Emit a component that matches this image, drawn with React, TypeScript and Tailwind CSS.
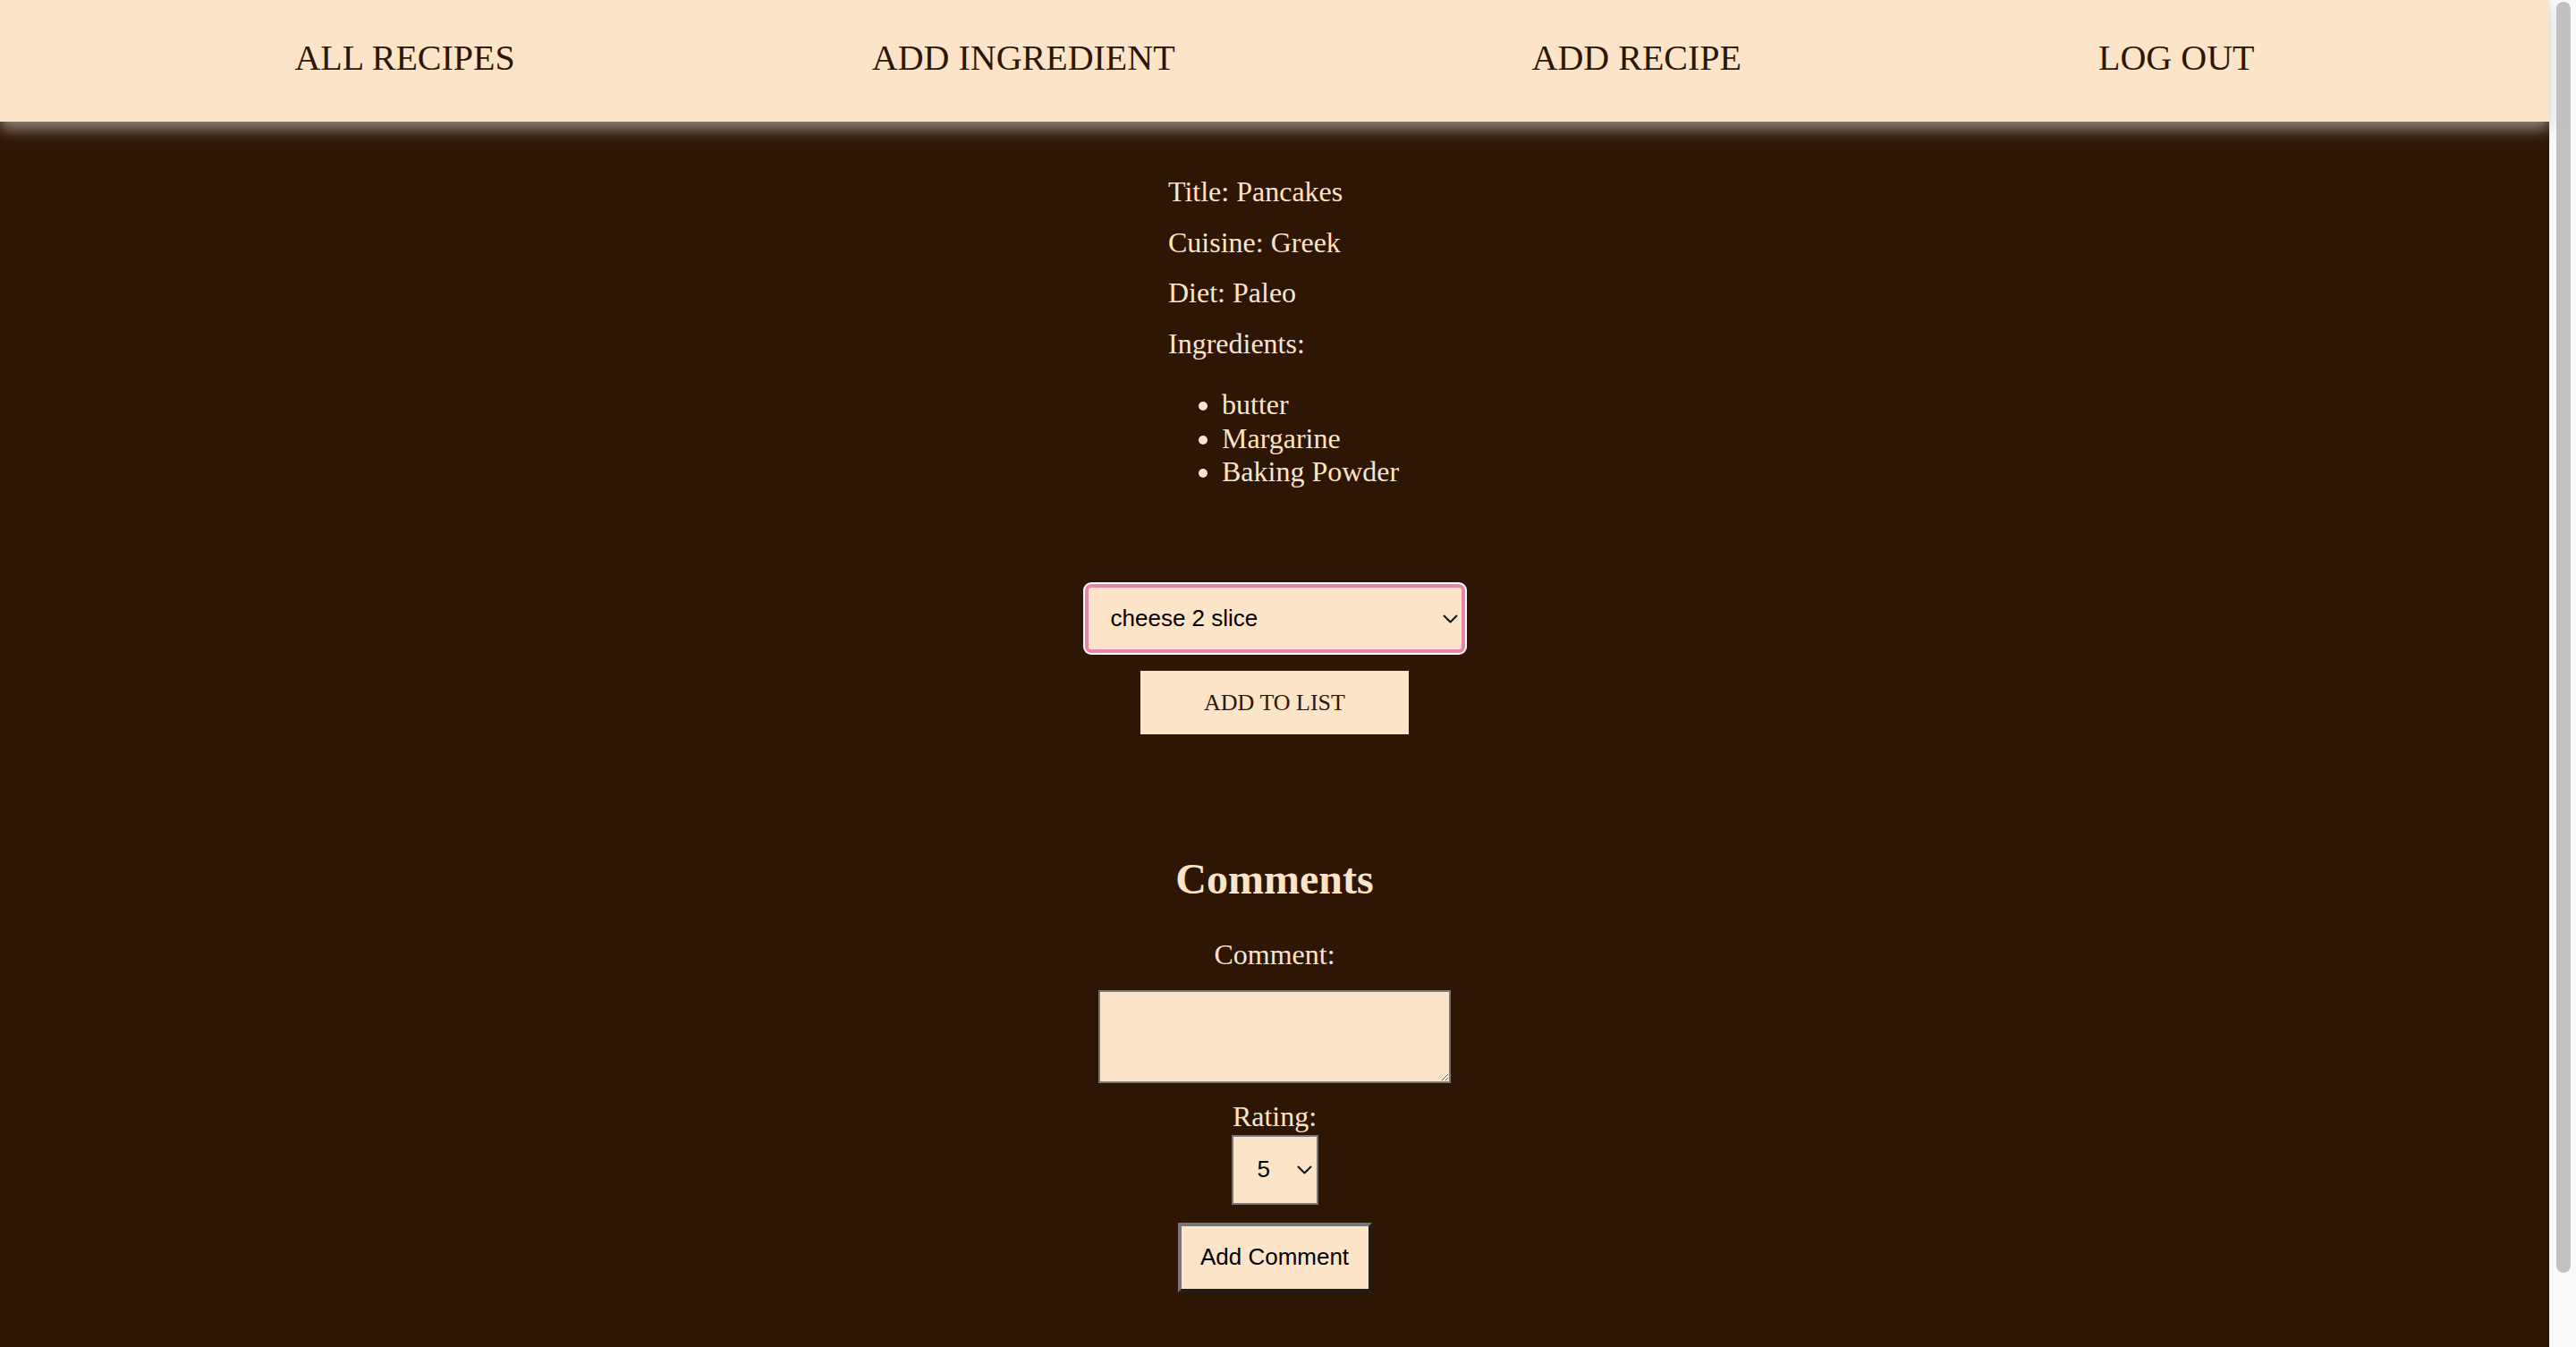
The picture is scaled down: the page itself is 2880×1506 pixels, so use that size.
/**
 * RecipeDetail - single recipe view with ingredient picker and comments
 */

import { useState } from 'react'

const navItems = ['ALL RECIPES', 'ADD INGREDIENT', 'ADD RECIPE', 'LOG OUT']
const ingredients = ['butter', 'Margarine', 'Baking Powder']
const pantry = ['cheese 2 slice', 'butter 1 tbsp', 'Margarine 2 tbsp', 'Baking Powder 1 tsp']

function Chevron({ className }: { className: string }) {
  return (
    <svg
      className={`pointer-events-none absolute ${className}`}
      width="17"
      height="10"
      viewBox="0 0 17 10"
      fill="none"
    >
      <path d="M1.5 1.5 L8.5 8.5 L15.5 1.5" stroke="#111" strokeWidth="2" strokeLinecap="round" strokeLinejoin="round" />
    </svg>
  )
}

function Scrollbar() {
  return (
    <div className="flex w-[30px] shrink-0 justify-center border-l border-[#ededed] bg-[#fafafa] pt-[2px]">
      <div className="h-[1421px] w-[16px] rounded-full bg-[#c1c1c1]" />
    </div>
  )
}

export default function App() {
  const [picked, setPicked] = useState(pantry[0])
  const [rating, setRating] = useState('5')
  const [comment, setComment] = useState('')

  return (
    <div className="flex h-screen w-full overflow-hidden bg-[#2e1605] font-['Liberation_Serif','Times_New_Roman',serif]">
      <div className="flex min-w-0 flex-1 flex-col">
        {/* Top nav */}
        <header className="relative z-10 flex h-[136px] shrink-0 items-center justify-around bg-[#fbe4c8] px-[130px] pb-[7px] text-[40px] leading-none text-[#2e1605] shadow-[0_8px_16px_rgba(200,190,180,0.7)]">
          {navItems.map(item => (
            <a key={item} href="#" className="whitespace-nowrap">
              {item}
            </a>
          ))}
        </header>

        <main className="flex flex-col items-center text-[#fbe4c8]">
          {/* Recipe info */}
          <section className="w-[500px] pl-[131px] pt-[60px] text-[32px] leading-[36px]">
            <div className="flex flex-col gap-[20.7px]">
              <p>Title: Pancakes</p>
              <p>Cuisine: Greek</p>
              <p>Diet: Paleo</p>
              <p>Ingredients:</p>
            </div>
            <ul className="mt-[32px] list-disc pl-[60px] leading-[37.5px] whitespace-nowrap">
              {ingredients.map(ing => (
                <li key={ing}>{ing}</li>
              ))}
            </ul>
          </section>

          {/* Ingredient picker */}
          <div className="relative mt-[106px]">
            <select
              value={picked}
              onChange={e => setPicked(e.target.value)}
              className="h-[77px] w-[425px] appearance-none rounded-[7px] border-[4px] border-[#e886a8] bg-[#fbe4c8] pl-[25px] font-['Liberation_Sans',Arial,sans-serif] text-[26px] text-black outline-none ring-2 ring-white"
            >
              {pantry.map(p => (
                <option key={p} value={p}>
                  {p}
                </option>
              ))}
            </select>
            <Chevron className="right-[8px] top-[34px]" />
          </div>
          <button className="mt-[20px] h-[71px] w-[300px] bg-[#fbe4c8] text-[26px] text-[#2e1605]">
            ADD TO LIST
          </button>

          {/* Comments */}
          <h2 className="mt-[134px] text-[48px] font-bold leading-[56px]">Comments</h2>
          <label className="mt-[38px] text-[32px] leading-[36px]">Comment:</label>
          <textarea
            value={comment}
            onChange={e => setComment(e.target.value)}
            className="mt-[22px] h-[104px] w-[394px] border-2 border-[#767676] bg-[#fbe4c8] text-black outline-none"
          />
          <label className="mt-[19px] text-[32px] leading-[36px]">Rating:</label>
          <div className="relative mt-[3px]">
            <select
              value={rating}
              onChange={e => setRating(e.target.value)}
              className="h-[78px] w-[97px] appearance-none border-2 border-[#767676] bg-[#fbe4c8] pl-[27px] font-['Liberation_Sans',Arial,sans-serif] text-[26px] text-black outline-none"
            >
              {['1', '2', '3', '4', '5'].map(r => (
                <option key={r} value={r}>
                  {r}
                </option>
              ))}
            </select>
            <Chevron className="right-[7px] top-[34px]" />
          </div>
          <button className="mt-[20px] h-[78px] w-[217px] border-[4px] border-t-[#767676] border-l-[#767676] border-r-[#1e1e1e] border-b-[#1e1e1e] bg-[#fbe4c8] font-['Liberation_Sans',Arial,sans-serif] text-[26px] text-black">
            Add Comment
          </button>
        </main>
      </div>
      <Scrollbar />
    </div>
  )
}
